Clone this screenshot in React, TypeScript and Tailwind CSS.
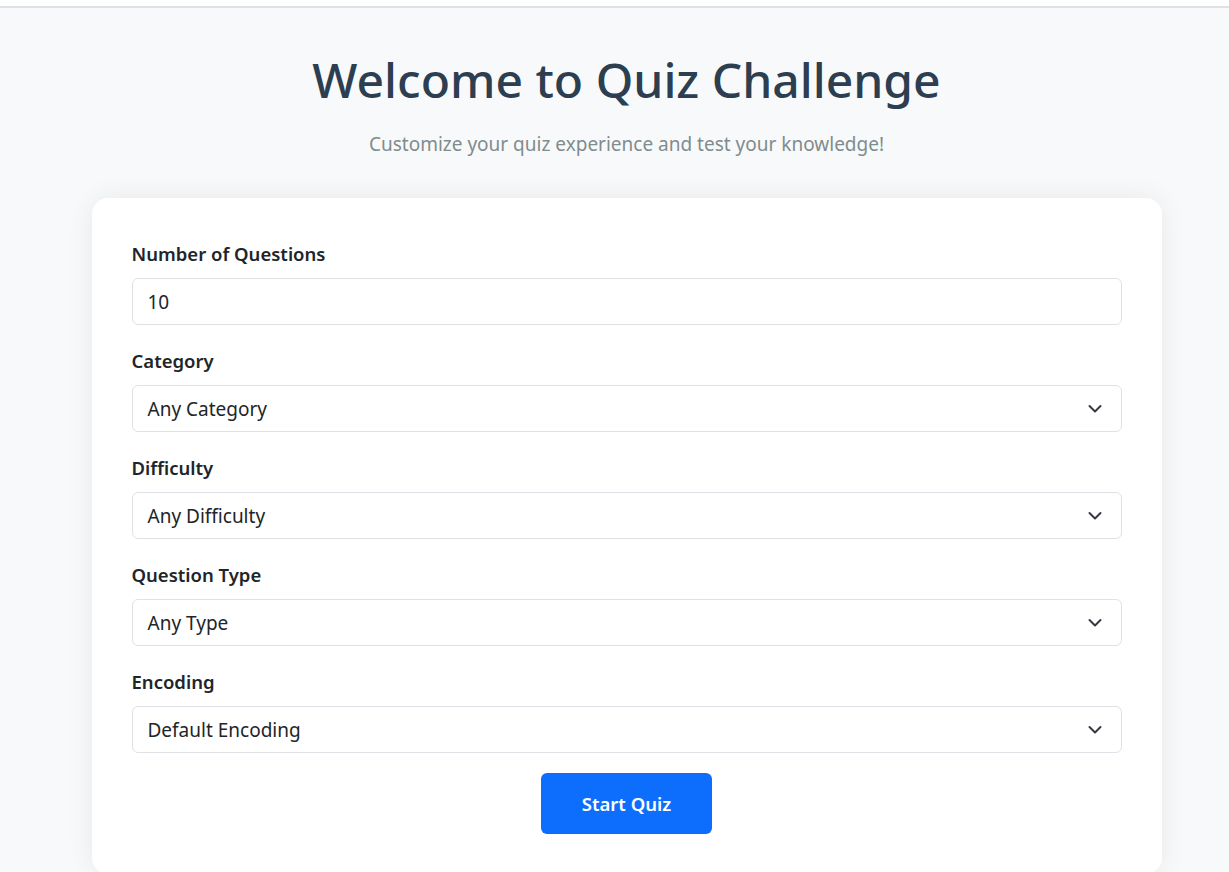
import React from 'react';

const Chevron: React.FC = () => (
  <svg className="pointer-events-none absolute right-[19px] top-1/2 -translate-y-1/2" width="14" height="9" viewBox="0 0 14 9" fill="none">
    <path d="M1.5 1.5L7 7l5.5-5.5" stroke="#343a40" strokeWidth="2" strokeLinecap="round" strokeLinejoin="round" />
  </svg>
);

const App: React.FC = () => {
  const selects = [
    { label: 'Category', value: 'Any Category' },
    { label: 'Difficulty', value: 'Any Difficulty' },
    { label: 'Question Type', value: 'Any Type' },
    { label: 'Encoding', value: 'Default Encoding' },
  ];

  return (
    <div className="min-h-screen bg-[#f8f9fa] font-['Noto_Sans',sans-serif]">
      <div className="h-[6px] bg-white" />
      <div className="h-[2px] bg-[#dfe2e0]" />
      <div className="pl-[24px]">
        <div className="mx-auto w-[1070px]">
          <h1 className="mt-[40px] text-center text-[48px] font-medium leading-[64px] text-[#2c3e50]">
            Welcome to Quiz Challenge
          </h1>
          <p className="mt-[18px] text-center text-[19px] leading-[28px] text-[#7f8c8d]">
            Customize your quiz experience and test your knowledge!
          </p>

          <div className="mt-[40px] rounded-2xl bg-white px-10 pt-10 pb-10 shadow-[0_0_28px_rgba(0,0,0,0.07)]">
            <div className="mb-[20px]">
              <label className="block pt-[3px] text-[18.5px] font-semibold leading-[26px] text-[#212529]">Number of Questions</label>
              <div className="mt-[11px] flex h-[47px] items-center rounded-md border border-[#dee2e6] px-[15px] pt-[2px] text-[19px] text-[#212529]">
                10
              </div>
            </div>

            {selects.map((s) => (
              <div key={s.label} className="mb-[20px]">
                <label className="block pt-[3px] text-[18.5px] font-semibold leading-[26px] text-[#212529]">{s.label}</label>
                <div className="relative mt-[11px] flex h-[47px] items-center rounded-md border border-[#dee2e6] px-[15px] pt-[2px] text-[19px] text-[#212529]">
                  {s.value}
                  <Chevron />
                </div>
              </div>
            ))}

            <div className="flex justify-center">
              <button className="h-[61px] w-[171px] rounded-md bg-[#0d6efd] text-[18.5px] font-semibold text-white">
                Start Quiz
              </button>
            </div>
          </div>
        </div>
      </div>
    </div>
  );
};

export default App;
